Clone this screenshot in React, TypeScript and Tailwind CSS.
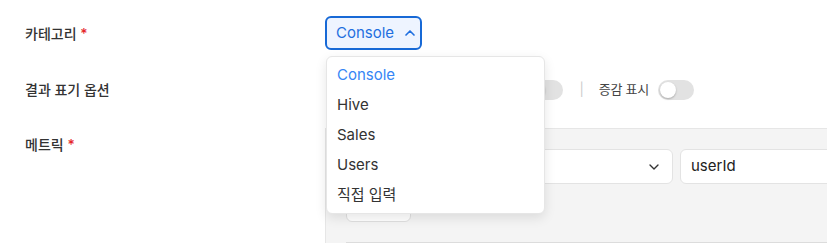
import { ChevronUp, ChevronDown } from 'lucide-react'

const font = { fontFamily: 'Inter, "Noto Sans CJK KR", sans-serif' }

function Toggle() {
  return (
    <div className="relative h-[20px] w-[36px] rounded-full bg-[#e2e2e2]">
      <div className="absolute left-[2px] top-[2px] h-[16px] w-[16px] rounded-full bg-white shadow-[0_1px_2px_rgba(0,0,0,0.25)]" />
    </div>
  )
}

export default function App() {
  const options = ['Console', 'Hive', 'Sales', 'Users', '직접 입력']

  return (
    <main className="relative h-[243px] w-[827px] overflow-hidden bg-white text-[#333]" style={font}>
      <div className="pt-[16px]">
        {/* Category */}
        <div className="grid grid-cols-[325px_1fr] items-center">
          <div className="pl-[25px] text-[14px] font-medium text-[#333]">
            카테고리 <span className="text-[#e5262b]">*</span>
          </div>
          <div>
            <button className="flex h-[34px] w-[97px] items-center gap-[8px] rounded-[6px] border-2 border-[#1769d6] bg-[#eef4ff] pl-[9px] text-[15px] text-[#1f6fe0]">
              Console
              <ChevronUp size={16} strokeWidth={2.5} />
            </button>
          </div>
        </div>

        {/* Display options */}
        <div className="mt-[29px] grid grid-cols-[325px_1fr] items-center">
          <div className="pl-[25px] text-[14px] font-medium text-[#333]">결과 표기 옵션</div>
          <div className="flex items-center text-[13px] text-[#444]">
            <span className="ml-[140px]">비율 표시</span>
            <div className="ml-[10px]">
              <Toggle />
            </div>
            <span className="ml-[17px] text-[#ccc]">|</span>
            <span className="ml-[15px] tracking-[-0.3px]">증감 표시</span>
            <div className="ml-[9px]">
              <Toggle />
            </div>
          </div>
        </div>

        {/* Metric */}
        <div className="mt-[28px] grid grid-cols-[325px_1fr]">
          <div className="pl-[25px] pt-[6px] text-[14px] font-medium text-[#333]">
            메트릭 <span className="text-[#e5262b]">*</span>
          </div>
          <div className="w-[700px] border-l border-t border-[#e6e6e6] bg-[#f4f4f4] px-[20px] pt-[20px]">
            <div className="flex gap-[7px]">
              <div className="flex h-[35px] w-[327px] items-center justify-end rounded-[6px] border border-[#e3e3e3] bg-white pr-[10px] text-[#333]">
                <ChevronDown size={16} strokeWidth={2} />
              </div>
              <div className="flex h-[35px] flex-1 items-center rounded-[6px] border border-[#e3e3e3] bg-white pl-[10px] text-[15px] text-[#222]">
                userId
              </div>
            </div>
            <button className="mt-[10px] h-[28px] w-[65px] rounded-[6px] border border-[#e0e0e0] bg-white text-[12px] text-[#666]">
              + 추가
            </button>
            <div className="mt-[20px] border-t border-[#dcdcdc]" />
          </div>
        </div>
      </div>

      {/* Open dropdown */}
      <div className="absolute left-[326px] top-[56px] w-[219px] rounded-[6px] border border-[#e6e6e6] bg-white py-[3px] shadow-[0_4px_12px_rgba(0,0,0,0.1)]">
        {options.map((o, i) => (
          <div
            key={o}
            className={
              'flex h-[30px] items-center px-[10px] text-[15px] ' +
              (i === 0 ? 'text-[#3686f5]' : 'text-[#333]')
            }
          >
            {o}
          </div>
        ))}
      </div>
    </main>
  )
}
